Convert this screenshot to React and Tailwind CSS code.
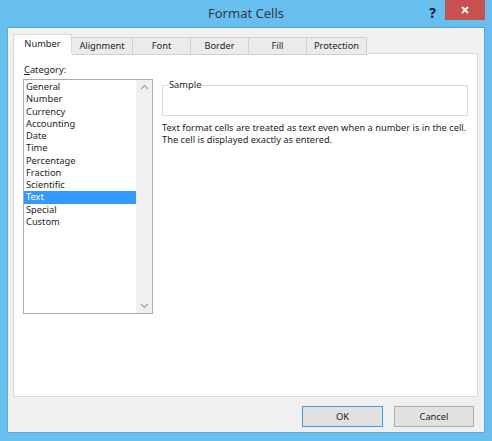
import { useState } from 'react'

const tabs = ['Number', 'Alignment', 'Font', 'Border', 'Fill', 'Protection']
const tabWidths = ['w-[59px]', 'w-[61px]', 'w-[58px]', 'w-[58px]', 'w-[58px]', 'w-[60px]']
const categories = ['General', 'Number', 'Currency', 'Accounting', 'Date', 'Time', 'Percentage', 'Fraction', 'Scientific', 'Text', 'Special', 'Custom']

function Chevron({ up }) {
  return (
    <svg width="9" height="6" viewBox="0 0 9 6" className="text-[#a0a0a0]">
      <path d={up ? 'M1 5 L4.5 1.5 L8 5' : 'M1 1 L4.5 4.5 L8 1'} fill="none" stroke="currentColor" strokeWidth="1.2" />
    </svg>
  )
}

export default function App() {
  const [selected, setSelected] = useState('Text')

  return (
    <div className="w-[492px] h-[441px] bg-[#67bff0] flex flex-col text-[9.3px] text-[#1e1e1e]" style={{ fontFamily: '"Noto Sans", sans-serif' }}>
      {/* title bar */}
      <div className="h-[27px] shrink-0 flex items-center relative">
        <div className="w-full text-center text-[13px] text-[#2e3b45] pt-[1px]">Format Cells</div>
        <div className="absolute right-[56px] top-[2px] text-[14px] font-bold text-[#1a1a1a]">?</div>
        <div className="absolute right-[7px] top-0 w-[40px] h-[20px] bg-[#c75050] flex items-center justify-center">
          <svg width="8" height="8" viewBox="0 0 8 8">
            <path d="M1 1 L7 7 M7 1 L1 7" stroke="white" strokeWidth="1.8" />
          </svg>
        </div>
      </div>

      {/* client area */}
      <div className="mx-[7px] mb-[8px] flex-1 bg-[#f0f0f0] border border-[#5aa9d6] flex flex-col px-[5px] pt-[6px]">
        <div className="flex items-end h-[20px] relative z-10">
          {tabs.map((t, i) => (
            <div
              key={t}
              className={
                i === 0
                  ? `${tabWidths[i]} h-[20px] bg-white border border-[#d9d9d9] border-b-white flex items-center justify-center pb-[1px]`
                  : `${tabWidths[i]} h-[18px] bg-[#ebebeb] border border-[#d0d0d0] border-l-0 flex items-center justify-center -mb-px`
              }
            >
              {t}
            </div>
          ))}
        </div>

        <div className="w-[465px] h-[344px] -mt-px bg-white border border-[#d9d9d9] flex px-[9px] pt-[9px]">
          <div className="w-[130px] shrink-0 flex flex-col">
            <div className="pl-[1px] leading-[14px] h-[15px]">
              <span className="underline">C</span>ategory:
            </div>
            <div className="mt-[1px] h-[235px] border border-[#ababab] flex">
              <div className="flex-1 flex flex-col pt-[1px]">
                {categories.map((c) => (
                  <div
                    key={c}
                    onClick={() => setSelected(c)}
                    className={`h-[12.27px] leading-[12.27px] pl-[2px] ${selected === c ? 'bg-[#3399ff] text-white' : ''}`}
                  >
                    {c}
                  </div>
                ))}
              </div>
              <div className="w-[16px] bg-[#f0f0f0] flex flex-col justify-between items-center py-[4px]">
                <Chevron up />
                <Chevron />
              </div>
            </div>
          </div>

          <div className="ml-[9px] flex flex-col pt-[22px]">
            <div className="w-[306px] h-[31px] border border-[#dcdcdc] relative">
              <span className="absolute left-[5px] -top-[8px] bg-white px-[1px] leading-[14px]">Sample</span>
            </div>
            <div className="mt-[6px] leading-[12.27px] whitespace-nowrap">
              <div>Text format cells are treated as text even when a number is in the cell.</div>
              <div>The cell is displayed exactly as entered.</div>
            </div>
          </div>
        </div>

        <div className="flex justify-end gap-[11px] mt-[9px] pr-[5px]">
          <button className="w-[81px] h-[21px] bg-[#e1e1e1] border border-[#3c9fe6] flex items-center justify-center">OK</button>
          <button className="w-[80px] h-[21px] bg-[#e1e1e1] border border-[#adadad] flex items-center justify-center">Cancel</button>
        </div>
      </div>
    </div>
  )
}
